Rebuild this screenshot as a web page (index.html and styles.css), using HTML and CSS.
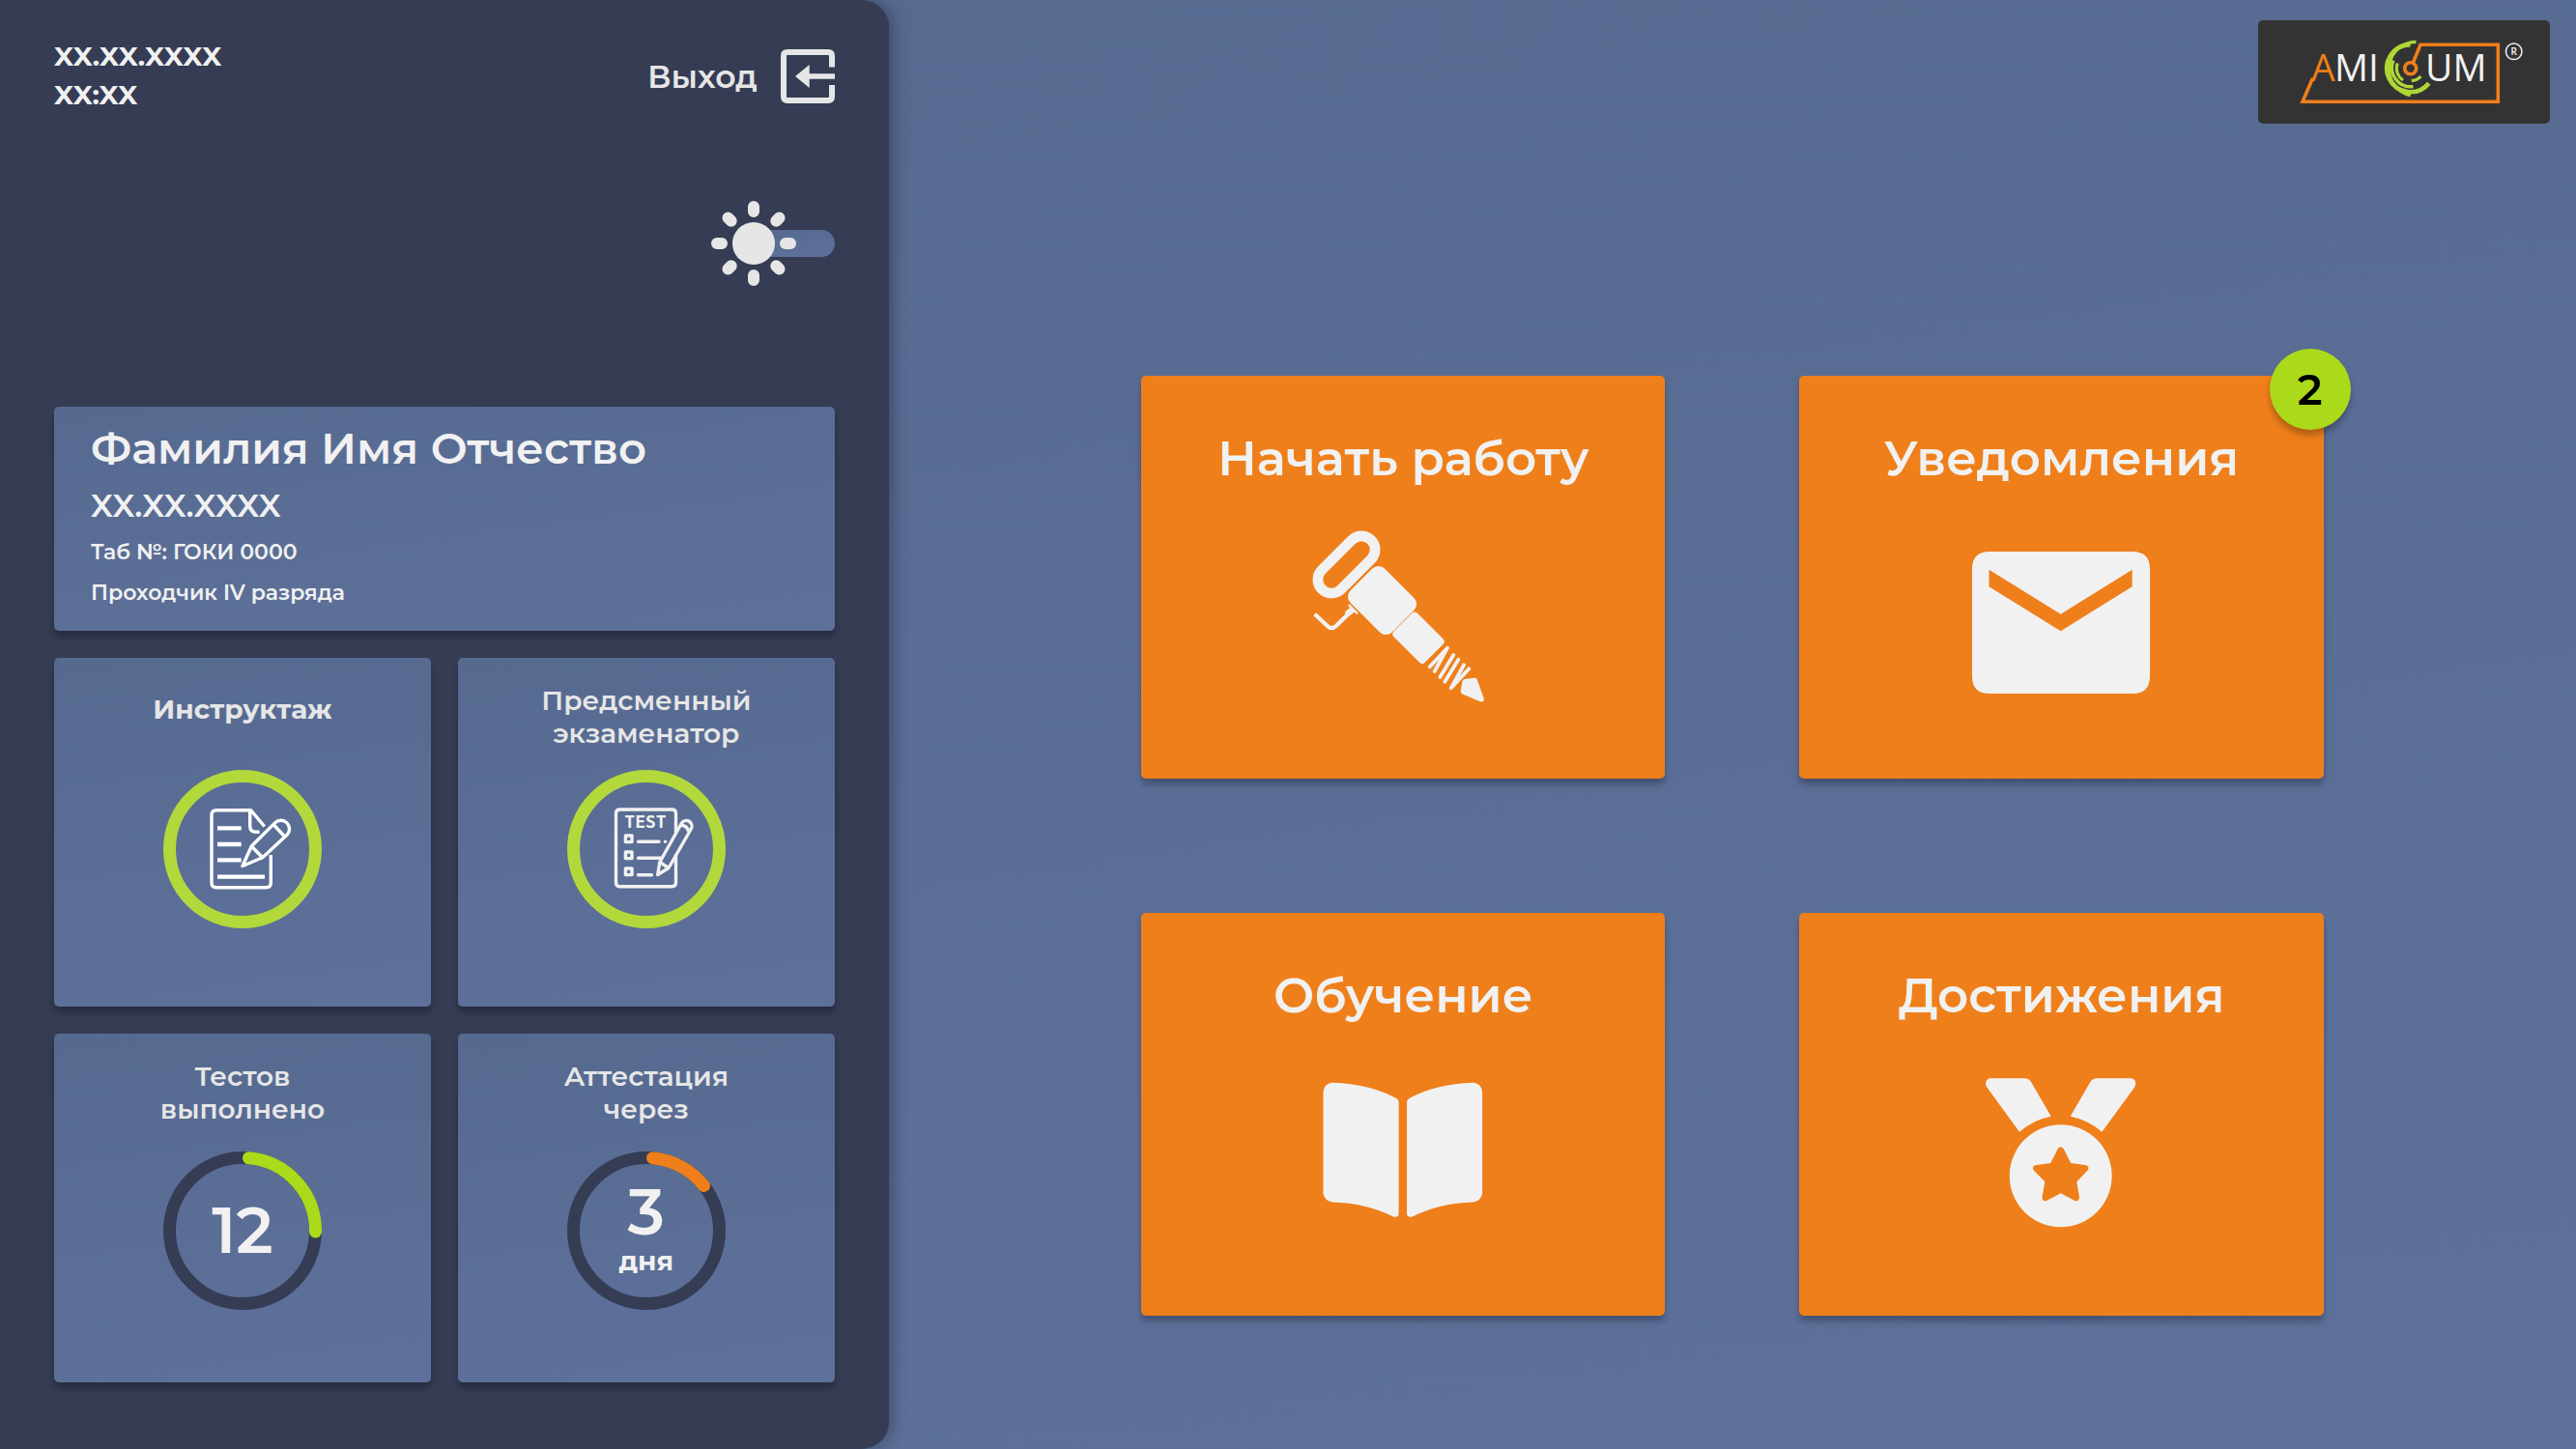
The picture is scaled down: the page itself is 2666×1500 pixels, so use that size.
FILE: index.html
```html
<!DOCTYPE html>
<html lang="ru">
<head>
<meta charset="utf-8">
<meta name="viewport" content="width=device-width, initial-scale=1">
<title>AMICUM</title>
<link rel="stylesheet" href="styles.css">
</head>
<body>
<div class="app">
  <aside class="sidebar">
    <header class="sidebar-head">
      <div class="clock"><div>XX.XX.XXXX</div><div>XX:XX</div></div>
      <button class="exit" type="button">
        <span>Выход</span>
        <svg width="56" height="56" viewBox="0 0 56 56" aria-hidden="true">
          <path d="M53 18.500V7Q53 3 49 3H7Q3 3 3 7V49Q3 53 7 53H49Q53 53 53 49V37" fill="none" stroke="currentColor" stroke-width="6"/>
          <path d="M15 28L29.700 16V25.200H56V30.800H29.700V40Z" fill="currentColor"/>
        </svg>
      </button>
    </header>

    <label class="theme">
      <input class="theme-input" type="checkbox" role="switch" aria-label="Светлая тема">
      <svg class="theme-sun" width="88" height="88" viewBox="-44 -44 88 88" aria-hidden="true">
        <circle r="22" fill="currentColor"/>
        <path d="M0-33V-38M0 33V38M-33 0H-38M33 0H38M23.300-23.300L26.500-26.500M-23.300-23.300L-26.500-26.500M23.300 23.300L26.500 26.500M-23.300 23.300L-26.500 26.500" stroke="currentColor" stroke-width="12" stroke-linecap="round"/>
      </svg>
    </label>

    <section class="panel profile">
      <h1 class="profile-name">Фамилия Имя Отчество</h1>
      <p class="profile-date">XX.XX.XXXX</p>
      <p class="profile-line">Таб №: ГОКИ 0000</p>
      <p class="profile-line">Проходчик IV разряда</p>
    </section>

    <div class="stats">
      <section class="panel stat">
        <h2 class="stat-title stat-title-single">Инструктаж</h2>
        <svg width="164" height="164" viewBox="0 0 164 164" aria-hidden="true">
          <circle class="ring-done" cx="82" cy="82" r="75.500"/>
          <g class="doc">
            <path d="M104.700 58.500L90.500 41.700H55Q50 41.700 50 46.700V116.700Q50 121.700 55 121.700H106.300Q111.300 121.700 111.300 116.700V88M89.700 42V58Q89.700 64.300 96 64.300H99.500"/>
            <path d="M82 99.500L91.300 79L115.500 54.900A8.800 8.800 0 0 1 128 67.300L102.700 90.700Z M91.300 79L102.700 90.700M114.500 57L125.500 69"/>
            <path d="M56 60.300H80.700M56 77H80.700M56 93.300H80.700M56 110.700H105" stroke-width="4.300"/>
          </g>
        </svg>
      </section>

      <section class="panel stat">
        <h2 class="stat-title">Предсменный<br>экзаменатор</h2>
        <svg width="164" height="164" viewBox="0 0 164 164" aria-hidden="true">
          <circle class="ring-done" cx="82" cy="82" r="75.500"/>
          <g class="doc doc-soft">
            <path d="M112.500 65V45Q112.500 41 108.500 41H54.500Q50.500 41 50.500 45V116.700Q50.500 120.700 54.500 120.700H108.500Q112.500 120.700 112.500 116.700V87"/>
            <path d="M60.400 68H67V74.600H60.400ZM60.400 85H67V91.600H60.400ZM60.400 102H67V108.600H60.400Z"/>
            <path d="M73.500 74.300H95M101.400 74.300H101.600M73.500 91.300H97M73.500 108.700H87.500" stroke-linecap="round"/>
            <path d="M93.700 108.500L95.800 95.500L118.500 55A5.600 5.600 0 0 1 128 61.500L105 101.500ZM95.800 95.500L105 101.500M117.500 57.500Q124 57 125.500 63.500"/>
          </g>
          <text class="doc-text" x="81" y="60" text-anchor="middle">TEST</text>
        </svg>
      </section>

      <section class="panel stat stat-progress">
        <h2 class="stat-title">Тестов<br>выполнено</h2>
        <div class="gauge">
          <svg class="gauge-ring" width="164" height="164" viewBox="0 0 164 164" aria-hidden="true">
            <circle class="ring-track" cx="82" cy="82" r="75.500"/>
            <path class="ring-value" d="M88.500 6.800A75.500 75.500 0 0 1 157.500 83"/>
          </svg>
          <strong class="gauge-number">12</strong>
        </div>
      </section>

      <section class="panel stat stat-progress">
        <h2 class="stat-title">Аттестация<br>через</h2>
        <div class="gauge gauge-with-unit">
          <svg class="gauge-ring" width="164" height="164" viewBox="0 0 164 164" aria-hidden="true">
            <circle class="ring-track" cx="82" cy="82" r="75.500"/>
            <path class="ring-value ring-warn" d="M88.500 6.800A75.500 75.500 0 0 1 141.500 35.500"/>
          </svg>
          <strong class="gauge-number">3</strong>
          <span class="gauge-unit">дня</span>
        </div>
      </section>
    </div>
  </aside>

  <main class="main">
    <a class="logo" href="#" aria-label="AMICUM">
      <svg width="302" height="107" viewBox="0 0 302 107" aria-hidden="true">
        <g fill="none" stroke="#ef7f1a" stroke-width="3.600">
          <path d="M160.500 43.500L168 25.300H248.300V84.300H46L56.500 60"/>
          <circle cx="157.700" cy="49.700" r="6"/>
        </g>
        <g fill="none" stroke="#aed736">
          <path d="M163.500 22.300A28 28 0 0 0 157.700 77.700" stroke-width="3.200"/>
          <path d="M157.500 25.200A24.500 24.500 0 1 0 176.700 65.200" stroke-width="4.600"/>
          <path d="M140 41.500A19.600 19.600 0 0 0 160.500 68.600" stroke-width="3.400"/>
          <path d="M144.300 44.500A14.500 14.500 0 0 0 150 62" stroke-width="3"/>
          <path d="M158.700 62.500A13 13 0 0 0 168.300 58" stroke-width="3.400"/>
        </g>
        <g class="logo-text">
          <text class="logo-a" x="55" y="63">A</text>
          <text x="79" y="63">MI</text>
          <text x="173" y="63">UM</text>
        </g>
        <circle cx="264.700" cy="32.300" r="8.300" fill="none" stroke="#f1f1f1" stroke-width="1.500"/>
        <text class="logo-r" x="264.700" y="36" text-anchor="middle">R</text>
      </svg>
    </a>

    <nav class="tiles">
      <a class="tile" href="#">
        <span class="tile-title">Начать работу</span>
        <svg width="192" height="192" viewBox="0 0 192 192" aria-hidden="true">
          <g fill="none" stroke="currentColor" stroke-linecap="round" stroke-linejoin="round">
            <rect x="1.500" y="27.400" width="72" height="28.200" rx="14.100" stroke-width="10.800" transform="rotate(-45 37.500 41.500)"/>
            <path d="M4.700 92.700L17.500 104.800Q22 109.500 27 104.800L39.500 92.500" stroke-width="4.200" stroke-linecap="butt"/>
            <path d="M39.500 91.500L42 89.500" stroke-width="6.500"/>
            <path d="M40.500 83.800L48.300 91.600" stroke-width="2.400"/>
            <path d="M123.700 147.300L142 127.700L128.700 152M148.300 135L134.300 158M153.300 139.700L139.300 162.700M159 145.300L145.700 169.300L164.300 149.300" stroke-width="3.800"/>
          </g>
          <g fill="currentColor">
            <rect x="44" y="53.500" width="61" height="50" rx="9" transform="rotate(45 74.500 78.500)"/>
            <rect x="89.300" y="100" width="45.500" height="34.500" rx="4" transform="rotate(45 112 117.200)"/>
            <path d="M160 160L170 158.700Q171.800 158.500 172.500 160L179.700 180Q180.300 184 176.500 183.500L157.500 175.500Q155.500 174.500 155.700 172.500L157.300 163Q157.700 160.500 160 160Z"/>
          </g>
        </svg>
      </a>

      <a class="tile" href="#">
        <span class="tile-title">Уведомления</span>
        <svg width="192" height="192" viewBox="0 0 192 192" aria-hidden="true">
          <path fill="currentColor" fill-rule="evenodd" d="M21 28H169Q187 28 187 46V157Q187 175 169 175H21Q3 175 3 157V46Q3 28 21 28ZM20.500 46.700V64.300L94.700 110.300L168.700 64.300V46.700L94.700 92.700Z"/>
        </svg>
        <span class="badge">2</span>
      </a>

      <a class="tile" href="#">
        <span class="tile-title">Обучение</span>
        <svg width="192" height="192" viewBox="0 0 192 192" aria-hidden="true">
          <g fill="currentColor">
            <path d="M22.800 21.700Q62 23 89.500 38.200Q91.600 39.700 91.600 42V157.500Q91.300 161.500 86.500 160.700Q58 146.500 23 145.500Q15.500 144.500 13.500 137V31.500Q14.500 22.500 22.800 21.700Z"/>
            <path d="M168.800 21.700Q129.600 23 102.100 38.200Q100 39.700 100 42V157.500Q100.300 161.500 105.100 160.700Q133.600 146.500 168.600 145.500Q176.100 144.500 178.100 137V31.500Q177.100 22.500 168.800 21.700Z"/>
          </g>
        </svg>
      </a>

      <a class="tile" href="#">
        <span class="tile-title">Достижения</span>
        <svg width="192" height="192" viewBox="0 0 192 192" aria-hidden="true">
          <g fill="currentColor">
            <path d="M22 17.300H57Q62 17.300 64.500 21.700L84.700 56.800Q67 60 52 72.700L18.300 26.500C15.500 22 18 17.300 22 17.300Z"/>
            <path d="M167.400 17.300H132.400Q127.400 17.300 124.900 21.700L104.700 56.800Q122.400 60 137.400 72.700L171.100 26.500C173.900 22 171.400 17.300 167.400 17.300Z"/>
            <path fill-rule="evenodd" d="M94.700 65.300A53 53 0 1 1 94.700 171.300A53 53 0 1 1 94.700 65.300ZM91.700 90.200L84.300 105L68.500 107.200Q65 108.300 66.300 112L78.300 124.300L75.500 140.500Q76 145.500 80.500 143.800L94.700 136.300L109 143.800Q113.500 145.500 114 140.500L111.300 124.300L123 112Q124.500 108.300 121 107.200L105.200 105L97.700 90.200Q94.700 86.500 91.700 90.200Z"/>
          </g>
        </svg>
      </a>
    </nav>
  </main>
</div>
</body>
</html>
```
FILE: styles.css
```css
:root {
  --dark: #353c54;
  --orange: #ef7f1a;
  --lime: #aada1a;
  --light: #f1f1f1;
  --soft: #e6e6e6;
  --steel: linear-gradient(172deg, #566a90, #5e719b);
}

* {
  box-sizing: border-box;
  margin: 0;
}

body {
  font-family: Montserrat, Inter, "Liberation Sans", sans-serif;
  font-weight: 600;
  color: var(--light);
}

svg {
  display: block;
  flex: none;
}

.app {
  display: flex;
  min-height: 100vh;
  background: var(--steel);
}

.sidebar {
  flex: 0 0 34.5%;
  padding: 38px 56px 56px;
  display: flex;
  flex-direction: column;
  background: var(--dark);
  border-radius: 0 28px 28px 0;
  box-shadow: 4px 0 16px rgba(0, 0, 0, 0.3);
}

.sidebar-head {
  display: flex;
  justify-content: space-between;
  align-items: center;
}

.clock {
  font-size: 28px;
  font-weight: 700;
  line-height: 40px;
}

.exit {
  display: flex;
  align-items: center;
  gap: 24px;
  padding: 2px 0 0;
  border: 0;
  background: none;
  color: var(--soft);
  font: inherit;
  font-size: 33px;
  cursor: pointer;
}

.theme {
  position: relative;
  align-self: flex-end;
  display: flex;
  align-items: center;
  justify-content: flex-end;
  width: 128px;
  height: 88px;
  margin: 90px 0 125px;
  color: var(--soft);
  cursor: pointer;
}

.theme-input {
  appearance: none;
  width: 80px;
  height: 28px;
  border-radius: 14px;
  background: var(--steel);
}

.theme-sun {
  position: absolute;
  left: 0;
  top: 0;
}

.panel {
  background: var(--steel);
  border-radius: 5px;
  box-shadow: 0 6px 6px rgba(0, 0, 0, 0.25);
}

.profile {
  padding: 12px 38px 18px;
}

.profile-name {
  font-size: 45px;
  font-weight: 600;
  line-height: 62px;
}

.profile-date {
  font-size: 33px;
  line-height: 56px;
}

.profile-line {
  font-size: 22px;
  line-height: 42px;
}

.stats {
  display: grid;
  grid-template-columns: 1fr 1fr;
  gap: 28px;
  margin-top: 28px;
}

.stat {
  min-height: 361px;
  padding: 27px 20px;
  display: flex;
  flex-direction: column;
  align-items: center;
  gap: 21px;
}

.stat-progress {
  gap: 27px;
}

.stat-title {
  min-height: 68px;
  color: var(--soft);
  font-size: 28px;
  font-weight: 600;
  line-height: 34px;
  text-align: center;
}

.stat-title-single {
  padding-top: 9px;
  font-weight: 700;
}

.ring-done,
.ring-track,
.ring-value {
  fill: none;
  stroke: #b2d83c;
  stroke-width: 13px;
}

.ring-track {
  stroke: var(--dark);
}

.ring-value {
  stroke: var(--lime);
  stroke-linecap: round;
}

.ring-warn {
  stroke: var(--orange);
}

.doc {
  fill: none;
  stroke: #ffffff;
  stroke-width: 3.4px;
  stroke-linejoin: round;
}

.doc-soft {
  stroke: var(--light);
}

.doc-text {
  fill: var(--light);
  font: 700 18px "DejaVu Sans Mono", monospace;
}

.gauge {
  position: relative;
  display: flex;
  flex-direction: column;
  align-items: center;
  justify-content: center;
  width: 164px;
  height: 164px;
}

.gauge-with-unit {
  padding-bottom: 6px;
}

.gauge-ring {
  position: absolute;
  inset: 0;
}

.gauge-number {
  font-size: 66px;
  font-weight: 600;
  line-height: 68px;
}

.gauge-unit {
  font-size: 28px;
  font-weight: 700;
  line-height: 32px;
}

.main {
  flex: 1;
  min-width: 0;
  display: flex;
  flex-direction: column;
  align-items: center;
  gap: 261px;
  padding: 21px 27px 138px;
}

.logo {
  align-self: flex-end;
  background: #333333;
  border-radius: 5px;
}

.logo-text {
  fill: var(--light);
  font: 400 39px "Open Sans", sans-serif;
}

.logo-a {
  fill: var(--orange);
}

.logo-r {
  fill: var(--light);
  font: 600 10px "Open Sans", sans-serif;
}

.tiles {
  display: grid;
  grid-template-columns: 1fr 1fr;
  gap: 139px;
  width: 72.3%;
}

.tile {
  position: relative;
  display: flex;
  flex-direction: column;
  align-items: center;
  gap: 36px;
  min-height: 417px;
  padding: 54px 20px;
  background: var(--orange);
  border-radius: 5px;
  box-shadow: 0 6px 6px rgba(0, 0, 0, 0.25);
  color: var(--light);
  text-decoration: none;
}

.tile-title {
  font-size: 50px;
  line-height: 64px;
}

.badge {
  position: absolute;
  top: -28px;
  right: -28px;
  width: 84px;
  height: 84px;
  border-radius: 50%;
  background: var(--lime);
  box-shadow: 0 6px 6px rgba(0, 0, 0, 0.25);
  color: #000000;
  font-size: 44px;
  line-height: 84px;
  text-align: center;
}
```
